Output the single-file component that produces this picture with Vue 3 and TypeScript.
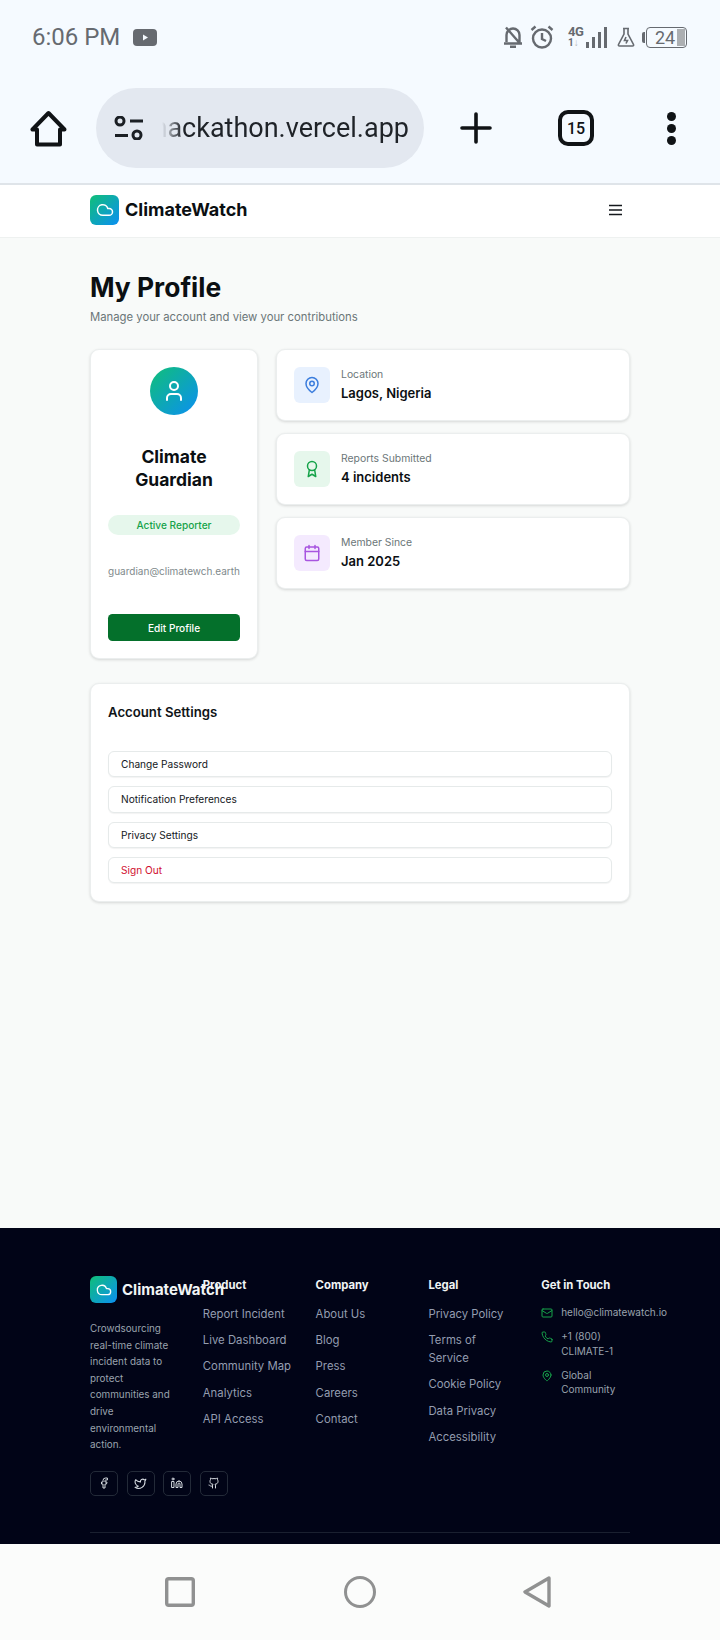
<template>
  <div class="phone">
    <div class="statusbar">
      <span class="time">6:06 PM</span>
      <svg class="yt" width="24" height="17" viewBox="0 0 24 17"><rect width="24" height="17" rx="4" fill="#666a70" /><path d="M10 5.5v6l5-3z" fill="#f5faff" /></svg>
      <div class="status-right">
        <svg width="20" height="22" viewBox="0 0 20 22" fill="none" stroke="#666a70" stroke-width="2.4" stroke-linejoin="round"><path d="M3.500 16V9a6.500 6.500 0 0 1 13 0v8M1 17.500h18M7 20.800h6M3 1.500l14 16" /></svg>
        <svg class="alarm" width="24" height="24" viewBox="0 0 24 24" fill="none" stroke="#666a70" stroke-width="2.400"><circle cx="12" cy="13.500" r="9" /><path d="M12 8v6l4 2M1.500 5 5.500 1.500M22.500 5l-4-3.500" /></svg>
        <div class="net">
          <span class="net-g">4G</span>
          <span class="net-a">1<i>↓</i></span>
        </div>
        <div class="bars"><i style="height: 6px" /><i style="height: 11px" /><i style="height: 16px" /><i style="height: 21px" /></div>
        <svg class="flask" width="18" height="20" viewBox="0 0 18 20" fill="none" stroke="#666a70" stroke-width="1.600"><path d="M6 1.500h6M7 1.500V7L1.500 17.500q-.5 1.500 1 1.500h13q1.500 0 1-1.500L11 7V1.500M9 10l-1.500 3.500h3L9 16.500" /></svg>
        <div class="battery">
          <i class="nub" />
          <div class="cell"><span>24</span><i class="level" /></div>
        </div>
      </div>
    </div>

    <div class="toolbar">
      <svg class="home" width="37" height="37" viewBox="0 0 37 37" fill="none" stroke="#101316" stroke-width="4" stroke-linejoin="round"><path d="M18.500 3 2.500 19.500H7V34.500H30V19.500H34.500Z" /></svg>
      <div class="urlbar">
        <svg width="30" height="24" viewBox="0 0 30 24" fill="none" stroke="#1b1f24" stroke-width="3"><circle cx="6" cy="5" r="4" /><path d="M16 5h13M1 19.500h13" /><circle cx="23" cy="19" r="4" /></svg>
        <div class="url"><span>hackathon.vercel.app</span></div>
      </div>
      <svg class="plus" width="32" height="32" viewBox="0 0 32 32" stroke="#101316" stroke-width="3.600" stroke-linecap="round"><path d="M16 2v28M2 16h28" /></svg>
      <div class="tabs">15</div>
      <div class="dots"><i /><i /><i /></div>
    </div>

    <nav class="nav">
      <div class="nav-inner">
        <div class="brand">
          <div class="logo logo-nav">
            <svg width="18" height="18" viewBox="0 0 24 24" fill="none" stroke="#fff" stroke-width="2" stroke-linecap="round" stroke-linejoin="round"><path :d="icons.cloud" /></svg>
          </div>
          <span class="brand-name">ClimateWatch</span>
        </div>
        <svg class="menu" width="15" height="12" viewBox="0 0 15 12" stroke="#14181c" stroke-width="1.500"><path d="M1 1.500h13M1 6h13M1 10.500h13" /></svg>
      </div>
    </nav>

    <main class="main">
      <h1>My Profile</h1>
      <p class="sub">Manage your account and view your contributions</p>

      <div class="profile-grid">
        <section class="card user-card">
          <div class="avatar">
            <svg width="24" height="24" viewBox="0 0 24 24" fill="none" stroke="#fff" stroke-width="2" stroke-linecap="round" stroke-linejoin="round"><path :d="icons.userBody" /><circle cx="12" cy="7" r="4" /></svg>
          </div>
          <h2>Climate Guardian</h2>
          <div class="pill">Active Reporter</div>
          <p class="email">guardian@climatewch.earth</p>
          <button class="edit">Edit Profile</button>
        </section>

        <div class="facts">
          <section v-for="fact in facts" :key="fact.label" class="card fact">
            <div class="fact-icon" :class="fact.tone">
              <svg v-if="fact.tone === 'blue'" width="18" height="18" viewBox="0 0 24 24" fill="none" stroke="currentColor" stroke-width="2" stroke-linecap="round" stroke-linejoin="round"><path :d="icons.pin" /><circle cx="12" cy="10" r="3" /></svg>
              <svg v-else-if="fact.tone === 'green'" width="18" height="18" viewBox="0 0 24 24" fill="none" stroke="currentColor" stroke-width="2" stroke-linecap="round" stroke-linejoin="round"><circle cx="12" cy="8" r="6" /><path :d="icons.award" /></svg>
              <svg v-else width="18" height="18" viewBox="0 0 24 24" fill="none" stroke="currentColor" stroke-width="2" stroke-linecap="round" stroke-linejoin="round"><rect x="3" y="4" width="18" height="18" rx="2" /><path d="M16 2v4M8 2v4M3 10h18" /></svg>
            </div>
            <div>
              <div class="fact-label">{{ fact.label }}</div>
              <div class="fact-value">{{ fact.value }}</div>
            </div>
          </section>
        </div>
      </div>

      <section class="card settings">
        <h3>Account Settings</h3>
        <div class="settings-list">
          <button v-for="item in settings" :key="item" class="setting" :class="{ danger: item === 'Sign Out' }">{{ item }}</button>
        </div>
      </section>
    </main>

    <footer class="footer">
      <div class="footer-grid">
        <div class="foot-brand">
          <div class="foot-logo-row">
            <div class="logo logo-foot">
              <svg width="16" height="16" viewBox="0 0 24 24" fill="none" stroke="#fff" stroke-width="2" stroke-linecap="round" stroke-linejoin="round"><path :d="icons.cloud" /></svg>
            </div>
            <span class="foot-name">ClimateWatch</span>
          </div>
          <p class="foot-desc">Crowdsourcing real-time climate incident data to protect communities and drive environmental action.</p>
          <div class="socials">
            <a class="social"><svg width="12" height="12" viewBox="0 0 24 24" fill="none" stroke="currentColor" stroke-width="2" stroke-linecap="round" stroke-linejoin="round"><path :d="icons.facebook" /></svg></a>
            <a class="social"><svg width="13" height="13" viewBox="0 0 24 24" fill="none" stroke="currentColor" stroke-width="2" stroke-linecap="round" stroke-linejoin="round"><path :d="icons.twitter" /></svg></a>
            <a class="social"><svg width="12" height="12" viewBox="0 0 24 24" fill="none" stroke="currentColor" stroke-width="2" stroke-linecap="round" stroke-linejoin="round"><path :d="icons.linkedin" /><rect x="2" y="9" width="4" height="12" /><circle cx="4" cy="4" r="2" /></svg></a>
            <a class="social"><svg width="12" height="12" viewBox="0 0 24 24" fill="none" stroke="currentColor" stroke-width="2" stroke-linecap="round" stroke-linejoin="round"><path :d="icons.github" /><path d="M9 18c-4.510 2-5-2-7-2" /></svg></a>
          </div>
        </div>

        <div v-for="col in linkCols" :key="col.title" class="foot-col">
          <h4>{{ col.title }}</h4>
          <ul>
            <li v-for="link in col.links" :key="link" :class="{ nowrap: link === 'Community Map' }">{{ link }}</li>
          </ul>
        </div>

        <div class="foot-col">
          <h4>Get in Touch</h4>
          <div class="contact">
            <div class="contact-row">
              <svg width="12" height="12" viewBox="0 0 24 24" fill="none" stroke="currentColor" stroke-width="2" stroke-linecap="round" stroke-linejoin="round"><rect x="2" y="4" width="20" height="16" rx="2" /><path d="m22 7-8.970 5.700a1.940 1.940 0 0 1-2.060 0L2 7" /></svg>
              <span class="nowrap">hello@climatewatch.io</span>
            </div>
            <div class="contact-row">
              <svg width="12" height="12" viewBox="0 0 24 24" fill="none" stroke="currentColor" stroke-width="2" stroke-linecap="round" stroke-linejoin="round"><path :d="icons.phone" /></svg>
              <span>+1 (800) CLIMATE-1</span>
            </div>
            <div class="contact-row">
              <svg width="12" height="12" viewBox="0 0 24 24" fill="none" stroke="currentColor" stroke-width="2" stroke-linecap="round" stroke-linejoin="round"><path :d="icons.pin" /><circle cx="12" cy="10" r="3" /></svg>
              <span>Global Community</span>
            </div>
          </div>
        </div>
      </div>
      <div class="foot-line" />
    </footer>

    <div class="sysnav">
      <svg width="30" height="30" viewBox="0 0 30 30" fill="none" stroke="#909191" stroke-width="3.400"><rect x="1.700" y="1.700" width="26.600" height="26.600" rx="2" /></svg>
      <svg width="32" height="32" viewBox="0 0 32 32" fill="none" stroke="#909191" stroke-width="3"><circle cx="16" cy="16" r="14.500" /></svg>
      <svg width="28" height="32" viewBox="0 0 28 32" fill="none" stroke="#909191" stroke-width="3.400" stroke-linejoin="round"><path d="M26 2 2 16 26 30Z" /></svg>
    </div>
  </div>
</template>

<script setup lang="ts">
interface Fact {
  label: string
  value: string
  tone: string
}

const icons = {
  cloud: 'M17.5 19H9a7 7 0 1 1 6.71-9h1.79a4.5 4.5 0 1 1 0 9Z',
  userBody: 'M19 21v-2a4 4 0 0 0-4-4H9a4 4 0 0 0-4 4v2',
  pin: 'M20 10c0 6-8 12-8 12s-8-6-8-12a8 8 0 0 1 16 0Z',
  award: 'M15.477 12.89 17 22l-5-3-5 3 1.523-9.11',
  phone: 'M22 16.92v3a2 2 0 0 1-2.18 2 19.79 19.79 0 0 1-8.63-3.07 19.5 19.5 0 0 1-6-6 19.79 19.79 0 0 1-3.07-8.67A2 2 0 0 1 4.11 2h3a2 2 0 0 1 2 1.72 12.84 12.84 0 0 0 .7 2.81 2 2 0 0 1-.45 2.11L8.09 9.91a16 16 0 0 0 6 6l1.27-1.27a2 2 0 0 1 2.11-.45 12.84 12.84 0 0 0 2.81.7A2 2 0 0 1 22 16.92z',
  facebook: 'M18 2h-3a5 5 0 0 0-5 5v3H7v4h3v8h4v-8h3l1-4h-4V7a1 1 0 0 1 1-1h3z',
  twitter: 'M22 4s-.7 2.1-2 3.4c1.6 10-9.4 17.3-18 11.6 2.2.1 4.4-.6 6-2C3 15.5.5 9.6 3 5c2.2 2.6 5.6 4.1 9 4-.9-4.2 4-6.6 7-3.8 1.1 0 3-1.2 3-1.2z',
  linkedin: 'M16 8a6 6 0 0 1 6 6v7h-4v-7a2 2 0 0 0-2-2 2 2 0 0 0-2 2v7h-4v-7a6 6 0 0 1 6-6z',
  github: 'M15 22v-4a4.8 4.8 0 0 0-1-3.5c3 0 6-2 6-5.5.08-1.25-.27-2.48-1-3.5.28-1.15.28-2.35 0-3.5 0 0-1 0-3 1.5-2.64-.5-5.36-.5-8 0C6 2 5 2 5 2c-.3 1.15-.3 2.35 0 3.5A5.403 5.403 0 0 0 4 9c0 3.5 3 5.5 6 5.5-.39.49-.68 1.05-.85 1.65-.17.6-.22 1.23-.15 1.85v4',
}

const facts: Fact[] = [
  { label: 'Location', value: 'Lagos, Nigeria', tone: 'blue' },
  { label: 'Reports Submitted', value: '4 incidents', tone: 'green' },
  { label: 'Member Since', value: 'Jan 2025', tone: 'purple' },
]

const settings = ['Change Password', 'Notification Preferences', 'Privacy Settings', 'Sign Out']

const linkCols = [
  { title: 'Product', links: ['Report Incident', 'Live Dashboard', 'Community Map', 'Analytics', 'API Access'] },
  { title: 'Company', links: ['About Us', 'Blog', 'Press', 'Careers', 'Contact'] },
  { title: 'Legal', links: ['Privacy Policy', 'Terms of Service', 'Cookie Policy', 'Data Privacy', 'Accessibility'] },
]
</script>

<style scoped>
.phone {
  width: 720px;
  height: 1640px;
  display: flex;
  flex-direction: column;
  overflow: hidden;
  font-family: Inter, "Noto Sans", sans-serif;
  background: #f8faf9;
}

/* android chrome */
.statusbar {
  height: 74px;
  flex: none;
  display: flex;
  align-items: center;
  padding: 0 33px 0 32px;
  background: #f5faff;
  box-sizing: border-box;
}
.time {
  font-family: Roboto, sans-serif;
  font-size: 24px;
  color: #666a70;
  width: 101px;
}
.status-right {
  margin-left: auto;
  display: flex;
  align-items: center;
}
.alarm { margin-left: 7px; }
.net {
  margin-left: 14px;
  width: 17px;
  font-family: Roboto, sans-serif;
  font-weight: 700;
  color: #666a70;
  line-height: 11px;
}
.net-g { display: block; font-size: 13px; letter-spacing: -0.5px; }
.net-a { display: block; font-size: 10px; }
.net-a i { color: #b5b8bb; font-style: normal; }
.bars {
  display: flex;
  align-items: flex-end;
  gap: 3px;
  height: 21px;
  margin-left: 1px;
}
.bars i {
  width: 3px;
  background: #666a70;
}
.flask { margin-left: 10px; }
.battery {
  margin-left: 7px;
  display: flex;
  align-items: center;
}
.nub {
  width: 3px;
  height: 11px;
  background: #666a70;
  border-radius: 2px 0 0 2px;
}
.cell {
  width: 41px;
  height: 21px;
  margin-left: 1px;
  box-sizing: border-box;
  border: 1.5px solid #666a70;
  border-radius: 4px;
  display: flex;
  align-items: center;
  font-family: Roboto, sans-serif;
  font-size: 18px;
  color: #666a70;
  padding: 1px 1px 1px 8px;
}
.level {
  width: 8px;
  height: 100%;
  margin-left: auto;
  background: #acafb2;
}

.toolbar {
  height: 111px;
  flex: none;
  display: flex;
  align-items: center;
  padding-bottom: 1px;
  box-sizing: border-box;
  background: #f5faff;
  border-bottom: 2px solid #dfe4e9;
}
.home {
  margin-left: 30px;
  flex: none;
}
.urlbar {
  margin-left: 29px;
  width: 328px;
  height: 80px;
  flex: none;
  border-radius: 40px;
  background: #e3e8f0;
  display: flex;
  align-items: center;
  padding-left: 18px;
  box-sizing: border-box;
}
.url {
  width: 247px;
  margin-left: 18px;
  overflow: hidden;
  display: flex;
  justify-content: flex-end;
  white-space: nowrap;
  font-family: Roboto, sans-serif;
  font-size: 27px;
  color: #1f2328;
  -webkit-mask-image: linear-gradient(90deg, transparent, #000 20px);
  mask-image: linear-gradient(90deg, transparent, #000 20px);
}
.plus {
  margin-left: 36px;
  flex: none;
}
.tabs {
  margin-left: 66px;
  width: 36px;
  height: 36px;
  flex: none;
  box-sizing: border-box;
  border: 4px solid #101316;
  border-radius: 10px;
  display: flex;
  align-items: center;
  justify-content: center;
  font-family: Roboto, sans-serif;
  font-weight: 500;
  font-size: 16px;
  color: #101316;
}
.dots {
  margin-left: 73px;
  display: flex;
  flex-direction: column;
  gap: 3px;
}
.dots i {
  width: 9px;
  height: 9px;
  border-radius: 50%;
  background: #101316;
}

/* site */
.nav {
  height: 53px;
  flex: none;
  background: #fff;
  border-bottom: 1px solid #eef1f0;
  box-sizing: border-box;
}
.nav-inner {
  width: 540px;
  height: 50px;
  margin: 0 auto;
  display: flex;
  align-items: center;
  justify-content: space-between;
  padding-right: 7px;
  box-sizing: border-box;
}
.brand {
  display: flex;
  align-items: center;
  gap: 6px;
}
.logo {
  display: flex;
  align-items: center;
  justify-content: center;
  background: linear-gradient(135deg, #10bf78, #0b8ff2);
  flex: none;
}
.logo-nav {
  width: 29px;
  height: 30px;
  border-radius: 6px;
}
.brand-name {
  margin-top: -2px;
  font-size: 18px;
  font-weight: 700;
  color: #0b0f12;
}
.main {
  flex: 1;
  min-height: 0;
  width: 540px;
  margin: 0 auto;
  padding-top: 31px;
}
h1 {
  margin: 0;
  font-size: 26.400px;
  line-height: 36px;
  font-weight: 700;
  color: #0b0f12;
}
.sub {
  margin: 4px 0 24px;
  font-size: 11.300px;
  line-height: 16px;
  color: #6b7678;
}
.profile-grid {
  display: grid;
  grid-template-columns: 168px 1fr;
  gap: 18px;
  align-items: start;
}
.card {
  box-sizing: border-box;
  background: #fff;
  border: 1px solid #ebeeee;
  border-radius: 9px;
  box-shadow: 0 1px 3px rgba(0, 0, 0, 0.14);
}
.user-card {
  height: 310px;
  padding: 17px;
  text-align: center;
}
.avatar {
  width: 48px;
  height: 48px;
  margin: 0 auto;
  border-radius: 50%;
  display: flex;
  align-items: center;
  justify-content: center;
  background: linear-gradient(135deg, #10bf78, #0b8ff2);
}
h2 {
  margin: 30px 0 0;
  font-size: 17.500px;
  line-height: 23px;
  font-weight: 700;
  color: #0b0f12;
}
.pill {
  margin-top: 24px;
  height: 20px;
  line-height: 20px;
  border-radius: 10px;
  background: #e6f7ec;
  color: #16a34a;
  font-size: 10.100px;
  font-weight: 500;
}
.email {
  margin: 29px -3px 0;
  font-size: 10px;
  line-height: 14px;
  color: #808a8c;
  white-space: nowrap;
}
.edit {
  display: block;
  width: 100%;
  height: 27px;
  margin-top: 36px;
  border: 0;
  border-radius: 4.5px;
  background: #04702b;
  color: #fff;
  font-family: inherit;
  font-size: 10.100px;
  font-weight: 500;
}
.facts {
  display: flex;
  flex-direction: column;
  gap: 12px;
}
.fact {
  height: 72px;
  padding: 0 17px;
  display: flex;
  align-items: center;
  gap: 11px;
}
.fact-icon {
  width: 36px;
  height: 36px;
  flex: none;
  border-radius: 6px;
  display: flex;
  align-items: center;
  justify-content: center;
}
.blue { background: #e8f1fe; color: #3b7ddd; }
.green { background: #e6f7ec; color: #16a34a; }
.purple { background: #f4eafe; color: #a855e0; }
.fact-label {
  font-size: 10.400px;
  line-height: 14px;
  color: #6b7678;
}
.fact-value {
  margin-top: 2px;
  font-size: 13px;
  line-height: 18px;
  font-weight: 600;
  color: #0b0f12;
}
.settings {
  height: 219px;
  margin-top: 24px;
  padding: 18px 17px;
}
h3 {
  margin: 0;
  font-size: 13.200px;
  line-height: 20px;
  font-weight: 600;
  color: #0f1417;
}
.settings-list {
  margin-top: 29px;
  display: flex;
  flex-direction: column;
  gap: 9px;
}
.setting {
  height: 26.300px;
  padding: 0 12px;
  text-align: left;
  background: #fff;
  border: 1px solid #e6eaea;
  border-radius: 6px;
  box-shadow: 0 1px 1px rgba(0, 0, 0, 0.05);
  font-family: inherit;
  font-size: 10.150px;
  color: #14181c;
}
.danger { color: #d01030; }

.footer {
  height: 316px;
  flex: none;
  box-sizing: border-box;
  padding-top: 48px;
  background: #010417;
  overflow: hidden;
}
.footer-grid {
  width: 540px;
  margin: 0 auto;
  display: grid;
  grid-template-columns: repeat(5, 88.800px);
  gap: 24px;
}
.foot-logo-row {
  display: flex;
  align-items: center;
  gap: 5px;
  white-space: nowrap;
}
.logo-foot {
  width: 27px;
  height: 27px;
  border-radius: 6px;
}
.foot-name {
  font-size: 15px;
  font-weight: 700;
  color: #f1f5f5;
}
.foot-desc {
  margin: 17px 0 0;
  font-size: 9.900px;
  line-height: 16.600px;
  color: #9aa3ae;
}
.socials {
  display: flex;
  gap: 8.500px;
  margin-top: 18px;
}
.social {
  width: 28px;
  height: 25px;
  flex: none;
  box-sizing: border-box;
  border: 1px solid #232a38;
  border-radius: 5px;
  display: flex;
  align-items: center;
  justify-content: center;
  color: #d5dae0;
}
.foot-col {
  position: relative;
}
h4 {
  margin: 0;
  font-size: 11.300px;
  line-height: 18px;
  font-weight: 700;
  color: #f1f5f5;
}
ul {
  list-style: none;
  margin: 10.500px 0 0;
  padding: 0;
}
li {
  font-size: 11.350px;
  line-height: 18px;
  margin-bottom: 8.400px;
  color: #949db0;
}
.contact {
  margin-top: 11px;
  display: flex;
  flex-direction: column;
  gap: 9.750px;
}
.contact-row {
  display: flex;
  gap: 8px;
  font-size: 10px;
  line-height: 14.400px;
  color: #9aa3ae;
}
.contact-row svg {
  flex: none;
  margin-top: 2px;
  color: #16a34a;
}
.nowrap { white-space: nowrap; }
.foot-line {
  width: 540px;
  height: 1px;
  margin: 36px auto 0;
  background: #1a2030;
}

.sysnav {
  height: 96px;
  flex: none;
  display: flex;
  align-items: center;
  background: #fbfcfb;
  padding: 0 0 0 165px;
  box-sizing: border-box;
}
.sysnav svg:nth-child(2) { margin-left: 149px; }
.sysnav svg:nth-child(3) { margin-left: 147px; }
</style>
